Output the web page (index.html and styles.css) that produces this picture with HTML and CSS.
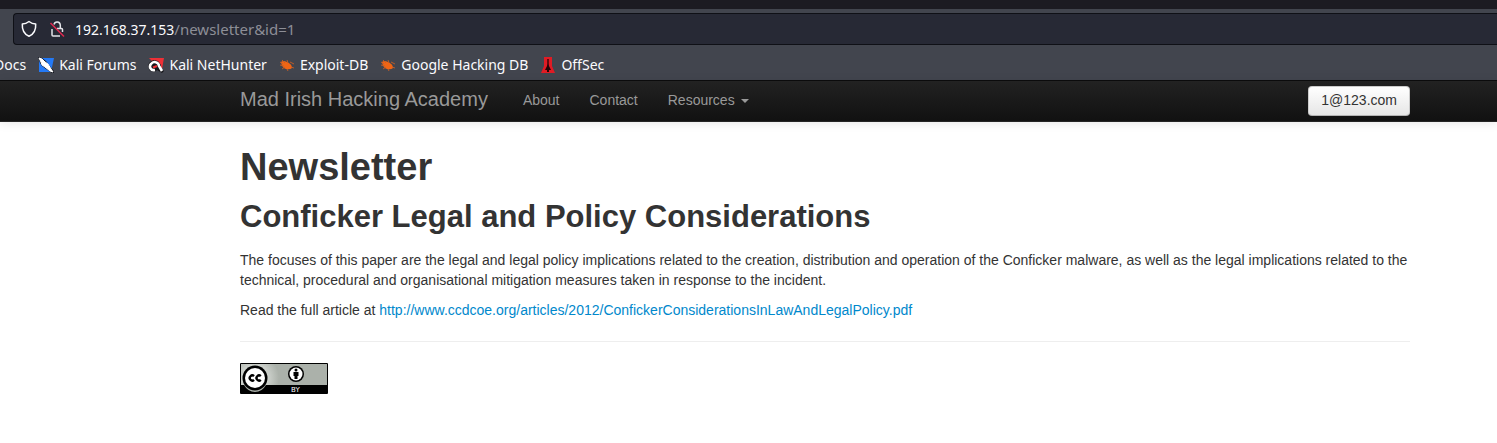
FILE: index.html
```
<!DOCTYPE html>
<html lang="en">
<head>
<meta charset="utf-8">
<title>Newsletter - Mad Irish Hacking Academy</title>
<link rel="stylesheet" href="styles.css">
</head>
<body>
<header class="browser">
  <div class="address-row">
    <div class="address">
      <svg class="shield" width="18" height="18" viewBox="0 0 18 18" fill="none" stroke="#fbfbfe" stroke-width="1.5" stroke-linejoin="round"><path d="M9 1.5Q6 3.8 2.3 4C2 9 3.4 13.800 9 16.300C14.600 13.800 16 9 15.700 4Q12 3.800 9 1.500Z"/></svg>
      <svg class="lock" width="18" height="18" viewBox="0 0 18 18" fill="none" stroke="#e4e4e9" stroke-width="1.500"><path d="M6 4.500A3.200 3.200 0 0 1 12.300 5V8.500M9 8.500H13.500Q14.500 8.500 14.500 9.500V12M12 16H5Q4 16 4 15V9"/><path d="M2.500 3L16 16.500" stroke="#e22850"/></svg>
      <div class="url"><span class="host">192.168.37.153</span>/newsletter&amp;id=1</div>
    </div>
  </div>
  <nav class="bookmarks" aria-label="Bookmarks">
    <a class="bookmark" href="#docs">Docs</a>
    <a class="bookmark" href="#forums">
      <svg width="16" height="16" viewBox="0 0 16 16"><path d="M1 1H16L13 15H1Z" fill="#2479f5"/><path d="M0 0L4 1L8 4L11 8L16 14V16H14L8 12L4 9L2 6Z" fill="#171a22"/><path d="M1 1L4 2L7 5L10 7L13 12L15 15L12 14L7 10L4 8L3 5Z" fill="#fff" stroke="#fff"/></svg>
      Kali Forums</a>
    <a class="bookmark" href="#nethunter">
      <svg width="16" height="16" viewBox="0 0 16 16"><path d="M1 1H16L14 12L8 8Z" fill="#ee3036"/><path d="M0 9Q1 4 6 3L10 4L13 8V11L16 14L14 16L9 13L7 15L2 14Z" fill="#17171b"/><path d="M7 13C2 14 1 9 3 7C6 3 11 6 11 9L14 14" fill="none" stroke="#fff" stroke-width="2.600"/><path d="M5 10.500L9 9" stroke="#ee3036" stroke-width="2.400"/></svg>
      Kali NetHunter</a>
    <a class="bookmark" href="#exploit">
      <svg width="16" height="16" viewBox="0 0 16 16"><path d="M2 5Q4 3 8 5Q13 7 13 11Q11 13 7 12Q3 11 2 5Z" fill="#ef6515"/><path d="M3 3L6 6M8 3L9 6M11 5L15 7M1 8L5 9M3 12L6 10M8 12L9 14M12 10L15 11M1 5L4 7" stroke="#c85d24" stroke-width=".9"/></svg>
      Exploit-DB</a>
    <a class="bookmark" href="#google">
      <svg width="16" height="16" viewBox="0 0 16 16"><path d="M2 5Q4 3 8 5Q13 7 13 11Q11 13 7 12Q3 11 2 5Z" fill="#ef6515"/><path d="M3 3L6 6M8 3L9 6M11 5L15 7M1 8L5 9M3 12L6 10M8 12L9 14M12 10L15 11M1 5L4 7" stroke="#c85d24" stroke-width=".9"/></svg>
      Google Hacking DB</a>
    <a class="bookmark" href="#offsec">
      <svg width="16" height="16" viewBox="0 0 16 16"><path d="M4 0H12V9L15 16H1L4 9Z" fill="#e01b24"/><path d="M8 2V15" stroke="#3b0508" stroke-width="1.500"/><path d="M8 7L10 11L11 13H9V15H7V13H5L6 11Z" fill="#240306"/></svg>
      OffSec</a>
  </nav>
</header>
<div class="navbar">
  <a class="brand" href="#home">Mad Irish Hacking Academy</a>
  <nav class="nav">
    <a href="#about">About</a>
    <a href="#contact">Contact</a>
    <a href="#resources">Resources <span class="caret"></span></a>
  </nav>
  <button class="account" type="button">1@123.com</button>
</div>
<main class="content">
  <h1>Newsletter</h1>
  <h2>Conficker Legal and Policy Considerations</h2>
  <p>The focuses of this paper are the legal and legal policy implications related to the creation, distribution and operation of the Conficker malware, as well as the legal implications related to the technical, procedural and organisational mitigation measures taken in response to the incident.</p>
  <p>Read the full article at <a href="http://www.ccdcoe.org/articles/2012/ConfickerConsiderationsInLawAndLegalPolicy.pdf">http://www.ccdcoe.org/articles/2012/ConfickerConsiderationsInLawAndLegalPolicy.pdf</a></p>
  <hr>
  <footer>
    <svg class="license" width="88" height="31" viewBox="0 0 88 31" role="img" aria-label="Creative Commons Attribution">
      <defs><radialGradient id="glow" gradientUnits="userSpaceOnUse" cx="15" cy="15" r="24"><stop offset=".5" stop-color="#d0d4cf"/><stop offset="1" stop-color="#abb1aa"/></radialGradient></defs>
      <rect width="88" height="31" rx="1" fill="#000"/>
      <path d="M1 1H87V22H1Z" fill="url(#glow)"/>
      <path d="M1 22H4Q8 29 15 29Q22 29 26 22Z" fill="#abb1aa"/>
      <circle cx="15" cy="15" r="12.500" fill="#000"/>
      <circle cx="15" cy="15" r="10" fill="#fff"/>
      <path d="M14 13.200A2.500 2.500 0 1 0 14 16.800M20.800 13.200A2.500 2.500 0 1 0 20.800 16.800" fill="none" stroke="#000" stroke-width="2.400"/>
      <circle cx="56" cy="11" r="8" fill="#000"/><circle cx="56" cy="11" r="6.500" fill="#fff"/>
      <circle cx="56" cy="7" r="1.500"/><path d="M53.500 9H58.500V13H57.500V16H54.500V13H53.500Z"/>
      <text class="license-text" x="51" y="29">BY</text>
    </svg>
  </footer>
</main>
</body>
</html>
```
FILE: styles.css
```
* { box-sizing: border-box; }
body { margin: 0; background: #fff; color: #333; font: 14px/20px "Liberation Sans", Arial, sans-serif; }
a { color: #0088cc; text-decoration: none; }
.browser { overflow: hidden; border-top: 9px solid #1c1b22; border-bottom: 1px solid #0c0c0d; background: #42454e; font-family: "Noto Sans", sans-serif; }
.address-row { padding: 4px 0 0 13px; }
.address { display: flex; align-items: center; height: 32px; padding-left: 6px; border: 1px solid #0f1016; border-right: 0; border-radius: 4px 0 0 4px; background: #272935; }
.shield { margin-right: 10px; }
.lock { margin-right: 9px; }
.url { color: #8d8e97; font-size: 15px; }
.host { color: #fbfbfe; font-size: 14px; }
.bookmarks { display: flex; gap: 12px; height: 35px; align-items: center; margin-left: -6px; padding-top: 4px; white-space: nowrap; }
.bookmark { display: flex; align-items: center; gap: 5px; color: #fbfbfe; font-size: 14px; }
.navbar { display: flex; height: 41px; padding: 0 87px 0 240px; border-bottom: 1px solid #252525; background: linear-gradient(#222, #111); box-shadow: 0 1px 10px rgba(0, 0, 0, .1); }
.brand { padding: 8px 20px 12px 0; color: #999; font-size: 20px; }
.nav { display: flex; }
.nav a { padding: 9px 15px 11px; color: #999; }
.caret { display: inline-block; margin-left: 2px; border: 4px solid transparent; border-top-color: #999; border-bottom: 0; vertical-align: middle; }
.account { align-self: flex-start; height: 30px; margin: 5px 0 0 auto; padding: 0 12px 2px; border: 1px solid #bbb; border-color: #ccc #ccc #b3b3b3; border-radius: 4px; background: linear-gradient(#fff, #e6e6e6); color: #333; font: inherit; }
.content { padding: 25px 87px 49px 240px; }
h1, h2 { margin: 0 0 10px; line-height: 40px; }
h1 { font-size: 38px; }
h2 { font-size: 31px; margin-bottom: 13px; }
p { margin: 0 0 10px; }
hr { margin: 21px 0; border: 0; border-top: 1px solid #eee; }
.license { display: block; }
.license-text { fill: #fff; font: 7px "DejaVu Sans", sans-serif; }
```
